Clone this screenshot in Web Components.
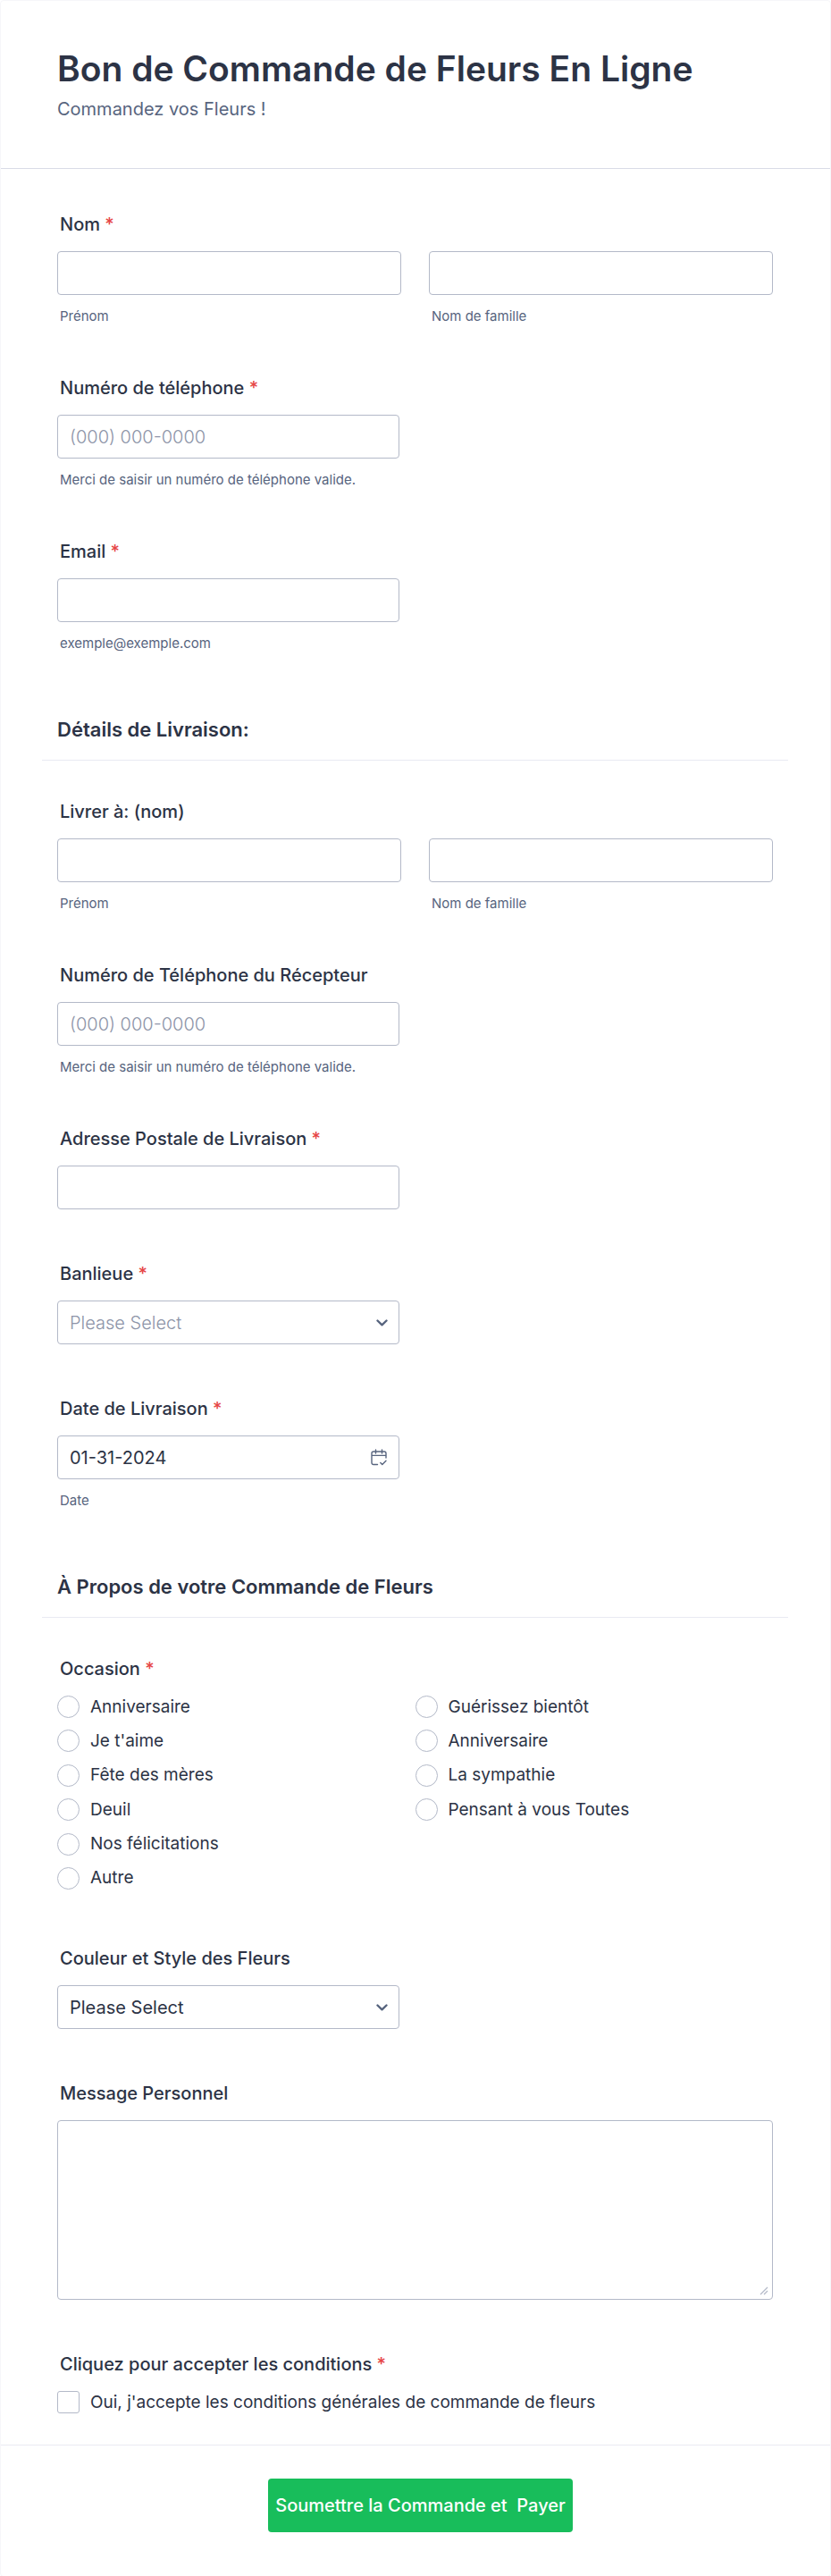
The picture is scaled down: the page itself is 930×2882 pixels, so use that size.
<!DOCTYPE html>
<html lang="fr">
<head>
<meta charset="utf-8">
<meta name="viewport" content="width=device-width, initial-scale=1">
<title>Bon de Commande de Fleurs En Ligne</title>
<style>
  :root {
    --ink: #2c3345;
    --muted: #57647e;
    --faint: #8d94a8;
    --edge: #b3b9c8;
    --rule: #d9dbe6;
    --rule-soft: #e9eaf2;
    --required: #e64545;
    --accent: #18bd5b;
  }
  body {
    margin: 0;
    background: #fff;
    color: var(--ink);
    font-family: Inter, "Liberation Sans", sans-serif;
    font-size: 20px;
    line-height: 24px;
  }
</style>
</head>
<body>
<order-form>
  <form-header slot="header" heading="Bon de Commande de Fleurs En Ligne" tagline="Commandez vos Fleurs !"></form-header>
  <name-field label="Nom" required></name-field>
  <text-field label="Numéro de téléphone" type="tel" placeholder="(000) 000-0000" hint="Merci de saisir un numéro de téléphone valide." required></text-field>
  <text-field label="Email" type="email" hint="exemple@exemple.com" required></text-field>
  <form-section>Détails de Livraison:</form-section>
  <name-field label="Livrer à: (nom)"></name-field>
  <text-field label="Numéro de Téléphone du Récepteur" type="tel" placeholder="(000) 000-0000" hint="Merci de saisir un numéro de téléphone valide."></text-field>
  <text-field label="Adresse Postale de Livraison" required></text-field>
  <select-field label="Banlieue" pale required></select-field>
  <text-field label="Date de Livraison" value="01-31-2024" hint="Date" icon="calendar" required></text-field>
  <form-section>À Propos de votre Commande de Fleurs</form-section>
  <choice-field label="Occasion" type="radio" rows="6" required
    options="Anniversaire|Je t'aime|Fête des mères|Deuil|Nos félicitations|Autre|Guérissez bientôt|Anniversaire|La sympathie|Pensant à vous Toutes"></choice-field>
  <select-field label="Couleur et Style des Fleurs"></select-field>
  <message-field label="Message Personnel"></message-field>
  <choice-field label="Cliquez pour accepter les conditions" type="checkbox" rows="1" required
    options="Oui, j'accepte les conditions générales de commande de fleurs"></choice-field>
  <submit-button slot="footer">Soumettre la Commande et&nbsp; Payer</submit-button>
</order-form>

<script>
const BASE = `
  *, *::before, *::after { box-sizing: border-box; }
  :host { display: block; }
  .label { display: block; width: fit-content; margin: 0 0 18px; padding: 0 0 0 3px; font-weight: 500; }
  .star { color: var(--required); }
  .hint { display: block; margin-top: 15px; padding-left: 3px; color: var(--muted); font-size: 15px; line-height: 17px; }
  .box { position: relative; max-width: 383px; }
  .control {
    display: block; width: 100%; height: 49px; margin: 0; padding: 0 13px;
    border: 1px solid var(--edge); border-radius: 4px; background: #fff;
    color: var(--ink); font: inherit; appearance: none;
  }
  .control::placeholder { color: var(--faint); font-weight: 300; opacity: 1; }
`;
const FIELD = BASE + `:host { padding: 30px 0; } fieldset { min-width: 0; margin: 0; padding: 0; border: 0; }`;

class Base extends HTMLElement {
  constructor() { super(); this.attachShadow({ mode: "open" }); }
  attr(name) { return this.getAttribute(name) || ""; }
  get star() { return this.hasAttribute("required") ? ' <span class="star">*</span>' : ""; }
  get req() { return this.hasAttribute("required") ? "required" : ""; }
  connectedCallback() { this.shadowRoot.innerHTML = this.render(); }
}

customElements.define("order-form", class extends Base {
  render() {
    return `<style>${BASE}
      .card { border: 1px solid #f6f6f9; border-radius: 4px; }
      .body { padding: 20px 64px 0 63px; }
      footer { display: flex; justify-content: center; padding: 37px 63px 49px 74px; border-top: 1px solid var(--rule-soft); }
    </style>
    <div class="card">
      <slot name="header"></slot>
      <main class="body"><slot></slot></main>
      <footer><slot name="footer"></slot></footer>
    </div>`;
  }
});

customElements.define("form-header", class extends Base {
  render() {
    return `<style>${BASE}
      :host { padding: 52px 63px 54px; border-bottom: 1px solid var(--rule); }
      h1 { margin: 0 0 9px; font-size: 39px; line-height: 48px; font-weight: 600; }
      p { margin: 0; color: var(--muted); }
    </style><h1>${this.attr("heading")}</h1><p>${this.attr("tagline")}</p>`;
  }
});

customElements.define("form-section", class extends Base {
  render() {
    return `<style>${BASE}
      :host { margin: 0 -17px 15px; padding: 45px 17px 21px; border-bottom: 1px solid var(--rule-soft); }
      h2 { margin: 0; font-size: 22px; line-height: 26px; font-weight: 600; }
    </style><h2><slot></slot></h2>`;
  }
});

customElements.define("name-field", class extends Base {
  render() {
    return `<style>${FIELD}
      .pair { display: grid; grid-template-columns: 1fr 1fr; gap: 31px; }
    </style>
    <fieldset>
      <legend class="label">${this.attr("label")}${this.star}</legend>
      <div class="pair">
        <div><input class="control" id="first" type="text" ${this.req}><label class="hint" for="first">Prénom</label></div>
        <div><input class="control" id="last" type="text" ${this.req}><label class="hint" for="last">Nom de famille</label></div>
      </div>
    </fieldset>`;
  }
});

const CALENDAR = `<svg class="icon" viewBox="0 0 18 19" fill="none" stroke="currentColor" stroke-width="1.4" stroke-linecap="round" stroke-linejoin="round" aria-hidden="true">
  <path d="M7.5 17.5H3a2 2 0 0 1-2-2V5a2 2 0 0 1 2-2h12a2 2 0 0 1 2 2v5M1 7.4h16M5.5 1v4M12.5 1v4M10.8 15.4l2 2L17 13.2"/></svg>`;

customElements.define("text-field", class extends Base {
  render() {
    const hint = this.attr("hint");
    return `<style>${FIELD}
      .icon { position: absolute; right: 14px; top: 15px; width: 18px; height: 19px; color: var(--muted); }
    </style>
    <label class="label" for="entry">${this.attr("label")}${this.star}</label>
    <div class="box">
      <input class="control" id="entry" type="${this.attr("type") || "text"}" value="${this.attr("value")}"
        placeholder="${this.attr("placeholder")}" ${hint ? 'aria-describedby="hint"' : ""} ${this.req}>
      ${this.attr("icon") === "calendar" ? CALENDAR : ""}
    </div>
    ${hint ? `<span class="hint" id="hint">${hint}</span>` : ""}`;
  }
});

customElements.define("select-field", class extends Base {
  render() {
    return `<style>${FIELD}
      .icon { position: absolute; right: 13px; top: 21px; width: 13px; height: 8px; color: var(--muted); pointer-events: none; }
      :host([pale]) select { color: var(--faint); font-weight: 300; }
    </style>
    <label class="label" for="pick">${this.attr("label")}${this.star}</label>
    <div class="box">
      <select class="control" id="pick" ${this.req}><option value="">Please Select</option></select>
      <svg class="icon" viewBox="0 0 13 8" fill="none" stroke="currentColor" stroke-width="2.4" stroke-linecap="round" stroke-linejoin="round" aria-hidden="true"><path d="M1.5 1.5l5 4.8 5-4.8"/></svg>
    </div>`;
  }
});

customElements.define("message-field", class extends Base {
  render() {
    return `<style>${FIELD}
      textarea.control { height: 201px; padding: 12px 13px; resize: vertical; }
      textarea::-webkit-resizer {
        background: url("data:image/svg+xml,%3Csvg xmlns='http://www.w3.org/2000/svg' width='15' height='15' viewBox='0 0 15 15' fill='none' stroke='%23b3b9c8' stroke-width='1.2'%3E%3Cpath d='M2 10l8-8M6 10l4-4'/%3E%3C/svg%3E") no-repeat;
      }
    </style>
    <label class="label" for="message">${this.attr("label")}</label>
    <textarea class="control" id="message"></textarea>`;
  }
});

customElements.define("choice-field", class extends Base {
  render() {
    const type = this.attr("type");
    const rows = Number(this.attr("rows"));
    const items = this.attr("options").split("|").map((text, i) => `
      <div class="option"><input type="${type}" name="choice" id="c${i}" value="${i}" ${this.req}><label for="c${i}">${text}</label></div>`).join("");
    return `<style>${FIELD}
      .options { display: grid; padding-bottom: 5px; align-content: space-between; }
      .options.many { grid-auto-flow: column; grid-template-rows: repeat(${rows}, 25px); grid-auto-columns: 1fr; min-height: 222px; }
      .option { display: flex; align-items: center; gap: 12px; height: 25px; font-size: 19px; }
      input { flex: none; width: 25px; height: 25px; margin: 0; border: 1px solid var(--edge); background: #fff; appearance: none; }
      input[type=radio] { border-radius: 50%; }
      input[type=checkbox] { border-radius: 3px; }
      input:checked { border: 7px solid var(--accent); }
    </style>
    <fieldset>
      <legend class="label">${this.attr("label")}${this.star}</legend>
      <div class="options ${rows > 1 ? "many" : ""}">${items}</div>
    </fieldset>`;
  }
});

customElements.define("submit-button", class extends Base {
  render() {
    return `<style>${BASE}
      button { display: block; min-height: 60px; padding: 0 8px; border: 0; border-radius: 4px;
        background: var(--accent); color: #fff; font: inherit; font-weight: 500; white-space: nowrap; cursor: pointer; }
    </style><button type="submit"><slot></slot></button>`;
  }
});
</script>
</body>
</html>
